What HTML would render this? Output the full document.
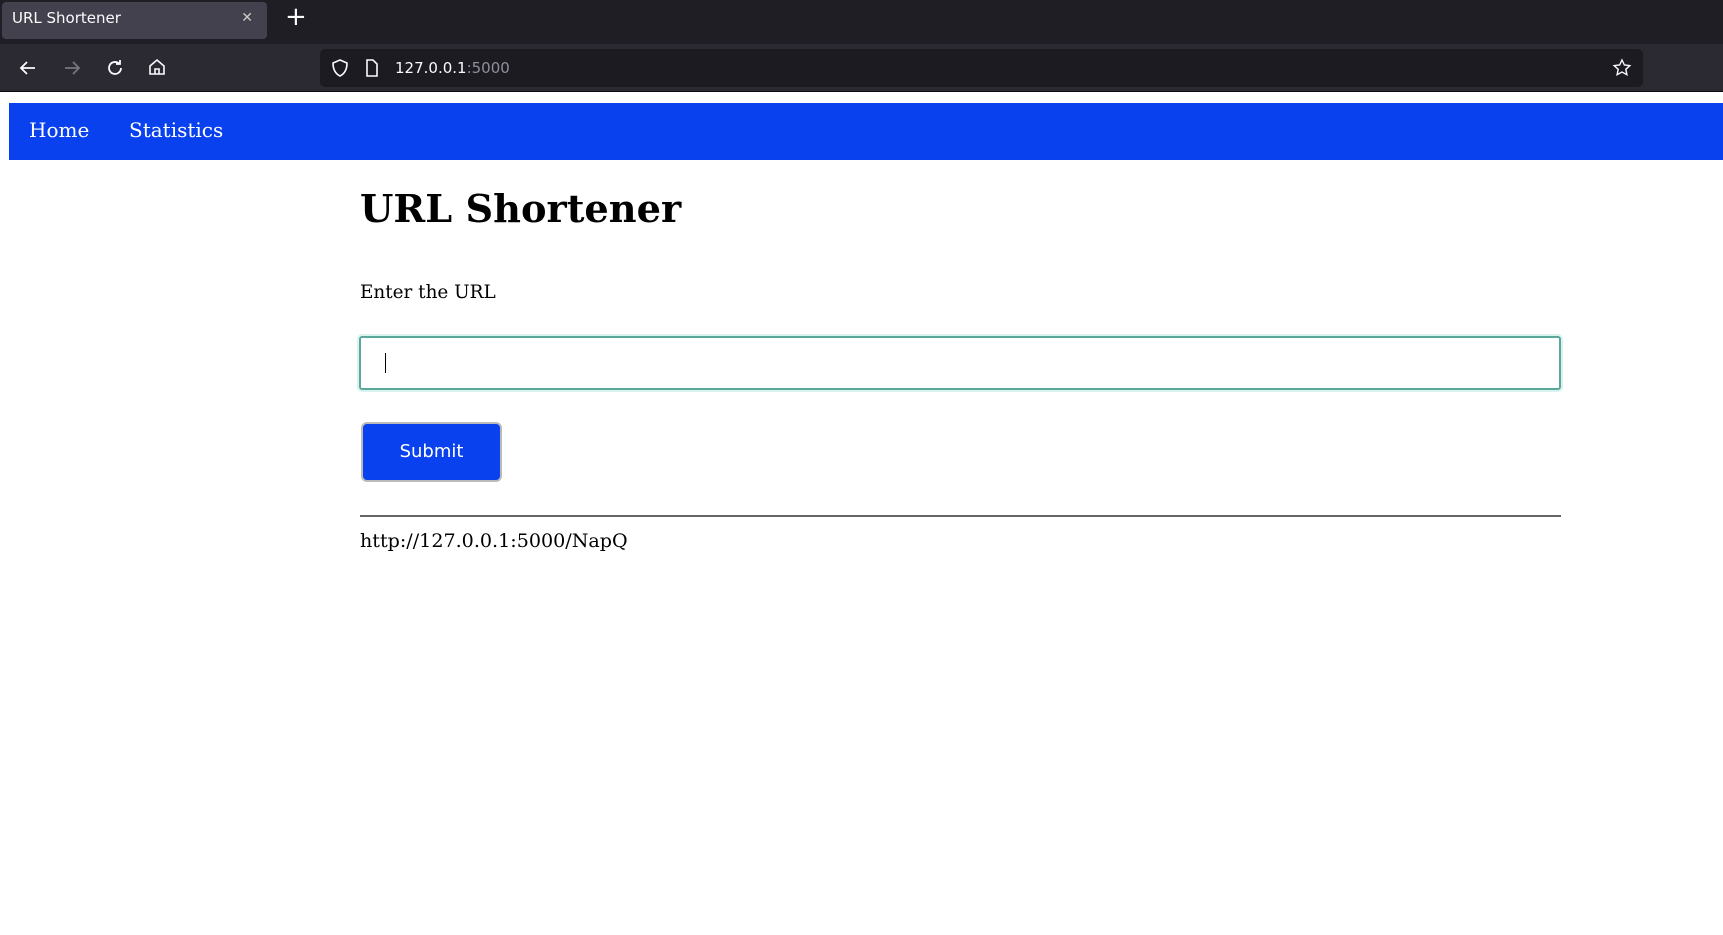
<!DOCTYPE html>
<html><head><meta charset="utf-8"><style>
*{margin:0;padding:0;box-sizing:border-box}
body{width:1723px;height:935px;background:#fff;position:relative;overflow:hidden;font-family:"DejaVu Serif","Liberation Serif",serif}
.tabbar{position:absolute;left:0;top:0;width:1723px;height:44px;background:#1f1e25}
.tab{position:absolute;left:2px;top:2px;width:265px;height:37px;background:#42414d;border-radius:4px;color:#fbfbfe;font:15px "DejaVu Sans",sans-serif;line-height:33px;padding-left:10px}
.tab .x{position:absolute;right:14px;top:0;font-size:14px;color:#ccc}
.plus{position:absolute;left:285px;top:2px;color:#fbfbfe;font:26px "DejaVu Sans",sans-serif}
.toolbar{position:absolute;left:0;top:44px;width:1723px;height:48px;background:#2b2a33;border-bottom:1px solid #0c0c0d}
.url{position:absolute;left:320px;top:5px;width:1323px;height:38px;background:#1c1b22;border-radius:5px}
.url .t{position:absolute;top:10px;font:15px "DejaVu Sans",sans-serif;color:#fbfbfe}
.url .t span{color:#8f8f9d}
svg{position:absolute}
.nav{position:absolute;left:9px;top:103px;width:1714px;height:57px;background:#0a41ee}
.nav a{position:absolute;top:15px;color:#fff;font-size:20px;text-decoration:none}
h1{position:absolute;left:360px;top:187px;font-size:38.3px;font-weight:bold;color:#000}
.lbl{position:absolute;left:360px;top:282px;font-size:18.4px}
.inp{position:absolute;left:359px;top:336px;width:1202px;height:54px;border:2px solid #5aa89a;border-radius:3px;box-shadow:0 0 0 2px #d9f3ee}
.inp i{position:absolute;left:24px;top:15px;width:1px;height:20px;background:#000}
.btn{position:absolute;left:361px;top:422px;width:141px;height:60px;background:#0a41ee;border:2px solid #bbb;border-radius:6px;color:#fff;font:18px "DejaVu Sans",sans-serif;text-align:center;line-height:56px}
.hr{position:absolute;left:360px;top:515px;width:1201px;height:2px;background:#666}
.res{position:absolute;left:360px;top:529px;font-size:19.1px}
</style></head><body>
<div class="tabbar"><div class="tab">URL Shortener<span class="x">✕</span></div><div class="plus">+</div></div>
<div class="toolbar">
<svg style="left:18px;top:14px" width="20" height="20" viewBox="0 0 20 20"><path d="M17 10H3M9 4L3 10l6 6" stroke="#fbfbfe" stroke-width="1.8" fill="none"/></svg>
<svg style="left:62px;top:14px" width="20" height="20" viewBox="0 0 20 20"><path d="M3 10h14M11 4l6 6-6 6" stroke="#77767c" stroke-width="1.8" fill="none"/></svg>
<svg style="left:105px;top:14px" width="20" height="20" viewBox="0 0 20 20"><path d="M16 10a6 6 0 1 1-2-4.5M15 2v4h-4" stroke="#fbfbfe" stroke-width="1.8" fill="none"/></svg>
<svg style="left:147px;top:13px" width="20" height="20" viewBox="0 0 20 20"><path d="M3 9l7-6 7 6v8H3zM8 17v-5h4v5" stroke="#fbfbfe" stroke-width="1.6" fill="none"/></svg>
<div class="url">
<svg style="left:10px;top:9px" width="20" height="20" viewBox="0 0 20 20"><path d="M10 2l7 3c0 7-3 11-7 13-4-2-7-6-7-13z" stroke="#fbfbfe" stroke-width="1.6" fill="none"/></svg>
<svg style="left:44px;top:9px" width="16" height="20" viewBox="0 0 16 20"><path d="M3 2h6l4 4v12H3z" stroke="#fbfbfe" stroke-width="1.6" fill="none"/></svg>
<div class="t" style="left:75px">127.0.0.1<span>:5000</span></div>
<svg style="left:1292px;top:9px" width="20" height="20" viewBox="0 0 20 20"><path d="M10 2l2.4 5 5.4.6-4 3.7 1.1 5.4L10 14l-4.9 2.7 1.1-5.4-4-3.7L7.6 7z" stroke="#fbfbfe" stroke-width="1.4" fill="none"/></svg>
</div></div>
<div class="nav"><a style="left:20px">Home</a><a style="left:120px">Statistics</a></div>
<h1>URL Shortener</h1>
<div class="lbl">Enter the URL</div>
<div class="inp"><i></i></div>
<div class="btn">Submit</div>
<div class="hr"></div>
<div class="res">http://127.0.0.1:5000/NapQ</div>
</body></html>
